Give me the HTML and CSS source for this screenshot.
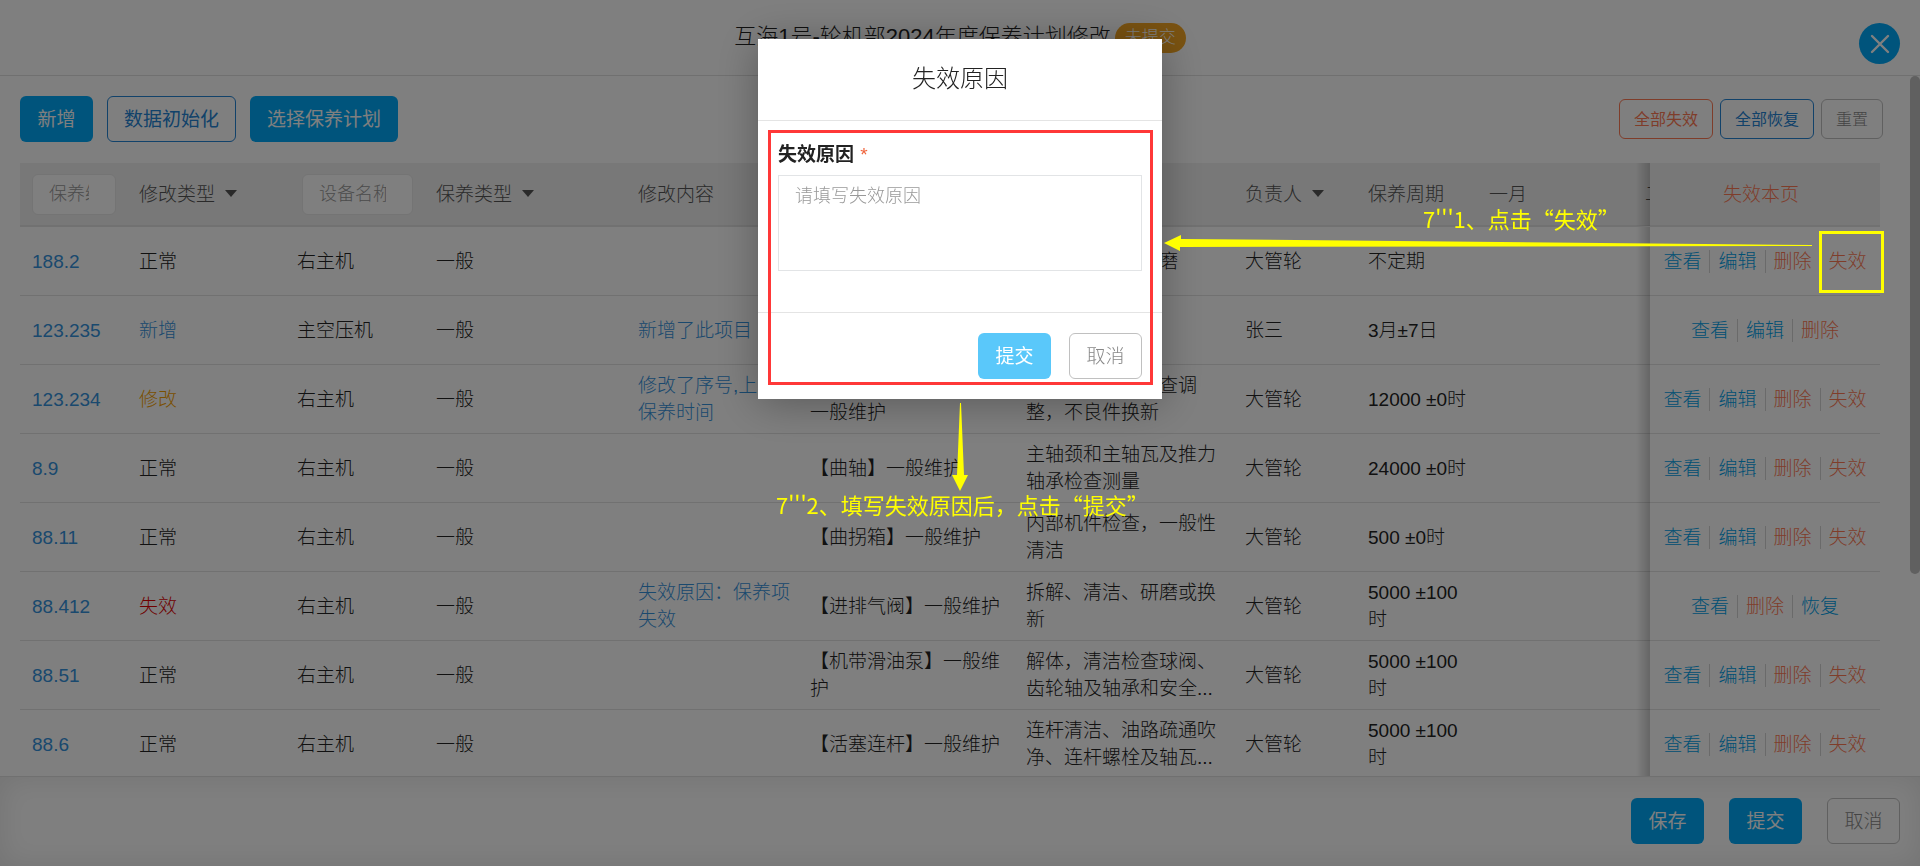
FILE: index.html
```html
<!DOCTYPE html>
<html lang="zh-CN">
<head>
<meta charset="utf-8">
<title>保养计划修改</title>
<link rel="stylesheet" href="styles.css">
</head>
<body>
<div class="page">
  <header class="page-head">
    <h1 class="page-title">互海1号-轮机部2024年度保养计划修改</h1>
    <span class="badge">未提交</span>
    <button class="close" type="button" aria-label="关闭">
      <svg width="20" height="20" viewBox="0 0 20 20"><path d="M2 2L18 18M18 2L2 18" fill="none" stroke="#fff" stroke-width="2.4" stroke-linecap="round"/></svg>
    </button>
  </header>

  <main class="content">
    <div class="toolbar">
      <div class="tools">
        <button class="btn primary" type="button">新增</button>
        <button class="btn outline" type="button">数据初始化</button>
        <button class="btn primary" type="button">选择保养计划</button>
      </div>
      <div class="tools small-tools">
        <button class="btn small danger" type="button">全部失效</button>
        <button class="btn small outline" type="button">全部恢复</button>
        <button class="btn small plain" type="button">重置</button>
      </div>
    </div>

    <div class="table-wrap">
      <table class="grid">
        <colgroup>
          <col class="c-no"><col class="c-kind"><col class="c-device"><col class="c-type"><col class="c-change"><col class="c-item"><col class="c-desc"><col class="c-person"><col class="c-cycle"><col class="c-month"><col class="c-month"><col class="c-ops">
        </colgroup>
        <thead>
          <tr>
            <th class="th-no"><input class="filter" type="text" placeholder="保养编号" aria-label="保养编号"></th>
            <th>修改类型<i class="caret"></i></th>
            <th class="th-device"><input class="filter" type="text" placeholder="设备名称" aria-label="设备名称"></th>
            <th>保养类型<i class="caret"></i></th>
            <th>修改内容</th>
            <th>保养项目</th>
            <th>保养要求</th>
            <th>负责人<i class="caret"></i></th>
            <th>保养周期</th>
            <th>一月</th>
            <th>二月</th>
            <th class="ops red">失效本页</th>
          </tr>
        </thead>
        <tbody>
          <tr><td><a href="#">188.2</a></td><td>正常</td><td>右主机</td><td>一般</td><td></td><td>【活塞】一般维护</td><td>拆解、清洁、研磨</td><td>大管轮</td><td>不定期</td><td></td><td></td>
            <td class="ops"><div class="links"><a href="#">查看</a><a href="#">编辑</a><a href="#" class="red">删除</a><a href="#" class="red">失效</a></div></td></tr>
          <tr><td><a href="#">123.235</a></td><td class="is-new">新增</td><td>主空压机</td><td>一般</td><td class="is-new">新增了此项目</td><td></td><td></td><td>张三</td><td>3月±7日</td><td></td><td></td>
            <td class="ops"><div class="links"><a href="#">查看</a><a href="#">编辑</a><a href="#" class="red">删除</a></div></td></tr>
          <tr><td><a href="#">123.234</a></td><td class="is-edit">修改</td><td>右主机</td><td>一般</td><td class="is-new">修改了序号,上次保养时间</td><td>【高压油泵组】<br>一般维护</td><td>拆解、清洁、检查调整，不良件换新</td><td>大管轮</td><td>12000 ±0时</td><td></td><td></td>
            <td class="ops"><div class="links"><a href="#">查看</a><a href="#">编辑</a><a href="#" class="red">删除</a><a href="#" class="red">失效</a></div></td></tr>
          <tr><td><a href="#">8.9</a></td><td>正常</td><td>右主机</td><td>一般</td><td></td><td>【曲轴】一般维护</td><td>主轴颈和主轴瓦及推力轴承检查测量</td><td>大管轮</td><td>24000 ±0时</td><td></td><td></td>
            <td class="ops"><div class="links"><a href="#">查看</a><a href="#">编辑</a><a href="#" class="red">删除</a><a href="#" class="red">失效</a></div></td></tr>
          <tr><td><a href="#">88.11</a></td><td>正常</td><td>右主机</td><td>一般</td><td></td><td>【曲拐箱】一般维护</td><td>内部机件检查，一般性清洁</td><td>大管轮</td><td>500 ±0时</td><td></td><td></td>
            <td class="ops"><div class="links"><a href="#">查看</a><a href="#">编辑</a><a href="#" class="red">删除</a><a href="#" class="red">失效</a></div></td></tr>
          <tr><td><a href="#">88.412</a></td><td class="is-void">失效</td><td>右主机</td><td>一般</td><td class="is-new">失效原因：保养项失效</td><td>【进排气阀】一般维护</td><td>拆解、清洁、研磨或换新</td><td>大管轮</td><td>5000 ±100时</td><td></td><td></td>
            <td class="ops"><div class="links"><a href="#">查看</a><a href="#" class="red">删除</a><a href="#">恢复</a></div></td></tr>
          <tr><td><a href="#">88.51</a></td><td>正常</td><td>右主机</td><td>一般</td><td></td><td>【机带滑油泵】一般维护</td><td>解体，清洁检查球阀、齿轮轴及轴承和安全...</td><td>大管轮</td><td>5000 ±100时</td><td></td><td></td>
            <td class="ops"><div class="links"><a href="#">查看</a><a href="#">编辑</a><a href="#" class="red">删除</a><a href="#" class="red">失效</a></div></td></tr>
          <tr><td><a href="#">88.6</a></td><td>正常</td><td>右主机</td><td>一般</td><td></td><td>【活塞连杆】一般维护</td><td>连杆清洁、油路疏通吹净、连杆螺栓及轴瓦...</td><td>大管轮</td><td>5000 ±100时</td><td></td><td></td>
            <td class="ops"><div class="links"><a href="#">查看</a><a href="#">编辑</a><a href="#" class="red">删除</a><a href="#" class="red">失效</a></div></td></tr>
        </tbody>
      </table>
    </div>
    <div class="scroll-thumb"></div>
  </main>

  <footer class="page-foot">
    <button class="btn primary" type="button">保存</button>
    <button class="btn primary" type="button">提交</button>
    <button class="btn plain" type="button">取消</button>
  </footer>
</div>

<div class="overlay">
  <form class="modal" role="dialog" aria-labelledby="dialog-title">
    <h2 class="modal-title" id="dialog-title">失效原因</h2>
    <div class="modal-body">
      <label class="field-label" for="reason">失效原因 <span class="required">*</span></label>
      <textarea class="reason" id="reason" placeholder="请填写失效原因"></textarea>
    </div>
    <div class="modal-foot">
      <button class="btn submit" type="button">提交</button>
      <button class="btn plain" type="button">取消</button>
    </div>
    <div class="mark-form"></div>
  </form>
</div>

<div class="notes">
  <svg class="arrows" width="1920" height="866" viewBox="0 0 1920 866">
    <path d="M1164 243L1181 235V239L1812 245V246L1180 247V251Z" fill="#ff0"/>
    <path d="M960 403H961L964 475H968L960 491L952 475H957Z" fill="#ff0"/>
  </svg>
  <div class="mark-action"></div>
  <p class="note note-1">7'''1、点击“失效”</p>
  <p class="note note-2">7'''2、填写失效原因后，点击“提交”</p>
</div>
</body>
</html>
```

FILE: styles.css
```css
* { box-sizing: border-box; }

body {
  margin: 0;
  height: 100vh;
  overflow: hidden;
  background: #fff;
  color: #222;
  font: 300 19px/27px "Liberation Sans", "Noto Sans CJK SC", sans-serif;
}

button, input, textarea { font: inherit; }
a { color: #3592dc; text-decoration: none; }

.page { display: flex; flex-direction: column; height: 100vh; }

.page-head {
  position: relative;
  display: flex;
  flex: none;
  justify-content: center;
  gap: 4px;
  height: 76px;
  padding-top: 23px;
  border-bottom: 1px solid #e0e0e0;
}
.page-title { margin: 0; font-size: 22px; font-weight: 300; line-height: 28px; }
.badge {
  height: 30px;
  padding: 0 10px;
  border-radius: 15px;
  background: #f5a623;
  color: #fff;
  font-size: 17px;
  line-height: 30px;
}
.close {
  position: absolute;
  top: 23px;
  right: 20px;
  display: grid;
  place-items: center;
  width: 41px;
  height: 41px;
  padding: 0;
  border: 0;
  border-radius: 50%;
  background: #00a8f8;
}

.content { position: relative; flex: 1; min-height: 0; padding: 20px 40px 0 20px; overflow: hidden; }
.toolbar { display: flex; align-items: center; justify-content: space-between; margin: 0 -3px 21px 0; }
.tools { display: flex; gap: 14px; }
.small-tools { gap: 7px; }

.btn {
  min-width: 73px;
  height: 46px;
  padding: 0 16px;
  border: 1px solid transparent;
  border-radius: 6px;
  background: #fff;
  font-weight: 400;
  white-space: nowrap;
}
.btn.small { min-width: 0; height: 40px; padding: 0 14px; font-size: 16px; }
.btn.primary { background: #00a8f8; color: #fff; }
.btn.outline { border-color: #2484d4; color: #2484d4; }
.btn.danger { border-color: #ff7a55; color: #ff7a55; }
.btn.plain { border-color: #c0c0c0; color: #888; font-weight: 300; }
.btn.submit { background: #5ac8fa; color: #fff; }

.table-wrap { overflow: hidden; }
.grid { width: 1999px; border-collapse: separate; border-spacing: 0; table-layout: fixed; }
.c-no { width: 107px; }
.c-kind { width: 158px; }
.c-device { width: 139px; }
.c-type { width: 202px; }
.c-change { width: 172px; }
.c-item { width: 216px; }
.c-desc { width: 219px; }
.c-person { width: 123px; }
.c-cycle { width: 121px; }
.c-month { width: 156px; }
.c-ops { width: 230px; }

th, td { padding: 0 8px 0 12px; text-align: left; vertical-align: middle; }
th { height: 64px; border-bottom: 2px solid #e2e2e2; background: #f0f0f0; color: #555; font-weight: 300; white-space: nowrap; }
td { height: 69px; border-bottom: 1px solid #e2e2e2; }
.th-no { padding-right: 11px; }
.th-device { padding: 0 11px 0 17px; }

.filter {
  display: block;
  width: 100%;
  height: 41px;
  padding: 0 26px 0 16px;
  border: 1px solid #e8e8e8;
  border-radius: 6px;
  background: #fff;
  font-size: 18px;
}
::placeholder { color: #999; opacity: 1; }
.caret {
  display: inline-block;
  margin-left: 10px;
  border: 6px solid transparent;
  border-top: 7px solid #555;
  border-bottom: 0;
  vertical-align: 4px;
}

.ops { position: sticky; right: 0; padding: 0; background: #fff; text-align: center; }
.ops::before {
  content: "";
  position: absolute;
  top: 0;
  bottom: -1px;
  left: -14px;
  width: 14px;
  background: linear-gradient(to left, rgba(0, 0, 0, .2), transparent);
}
th.ops { padding-right: 8px; background: #f0f0f0; }
.links { display: flex; justify-content: center; }
.links a { padding: 0 8px; color: #00a0e8; line-height: 23px; }
.links a + a { border-left: 1px solid #d4d4d4; }
.red, .links .red { color: #ff7a55; }
.is-new { color: #3592dc; }
.is-edit { color: #f5a000; }
.is-void { color: #e00000; }

.scroll-thumb { position: absolute; top: 0; right: 0; width: 10px; height: 498px; border-radius: 5px; background: #c0c0c0; }

.page-foot {
  display: flex;
  flex: none;
  gap: 25px;
  justify-content: flex-end;
  height: 90px;
  padding: 21px 20px 0;
  border-top: 1px solid #e0e0e0;
  box-shadow: inset 0 0 30px rgba(0, 0, 0, .1);
}

.overlay {
  position: fixed;
  inset: 0;
  display: flex;
  align-items: flex-start;
  justify-content: center;
  padding-top: 39px;
  background: rgba(0, 0, 0, .5);
}
.modal { position: relative; width: 404px; background: #fff; box-shadow: 0 4px 40px rgba(0, 0, 0, .3); }
.modal-title { margin: 0; padding: 24px 0 25px; border-bottom: 1px solid #e4e4e4; font-size: 24px; font-weight: 300; line-height: 32px; text-align: center; }
.modal-body { padding: 20px 20px 41px; }
.field-label { display: block; font-weight: 700; margin-bottom: 7px; }
.required { margin-left: 1px; color: #f0643c; font-weight: 400; }
.reason {
  display: block;
  width: 100%;
  height: 96px;
  padding: 7px 16px;
  border: 1px solid #e2e4e6;
  font-size: 18px;
  resize: none;
}
.modal-foot { display: flex; gap: 18px; justify-content: flex-end; padding: 20px; border-top: 1px solid #e4e4e4; }
.mark-form { position: absolute; inset: 91px 9px 14px 10px; border: 3px solid #ff3838; pointer-events: none; }

.notes { position: fixed; inset: 0; pointer-events: none; }
.arrows { position: absolute; top: 0; left: 0; }
.mark-action { position: absolute; top: 231px; left: 1819px; width: 65px; height: 62px; border: 3px solid #ff0; }
.note { position: absolute; margin: 0; color: #ff0; font: 400 22px/30px "Noto Sans CJK SC", sans-serif; white-space: nowrap; }
.note-1 { top: 203px; left: 1423px; }
.note-2 { top: 489px; left: 776px; }
```
